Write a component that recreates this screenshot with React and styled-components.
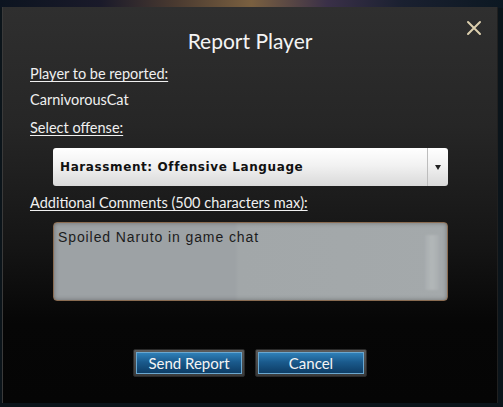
import React from 'react';
import styled, { createGlobalStyle } from 'styled-components';

const Global = createGlobalStyle`
  html, body {
    margin: 0;
    padding: 0;
    width: 503px;
    height: 407px;
    overflow: hidden;
    background:
      linear-gradient(90deg, #0c1420 0%, #1a1a2a 20%, #4a3a30 35%, #7a6040 50%, #3a3048 65%, #1a2030 80%, #0c1822 100%) top / 100% 8px no-repeat,
      #0b141a;
  }
  #root {
    height: 100%;
  }
`;

const Screen = styled.div`
  height: 100%;
  box-sizing: border-box;
  padding: 7px 5px 4px 2px;
  display: flex;
`;

const Panel = styled.div`
  flex: 1;
  position: relative;
  display: flex;
  flex-direction: column;
  background: linear-gradient(180deg, #2f2f2f 0%, #262626 30%, #151515 60%, #060606 80%, #050505 100%);
  box-shadow: inset 1px 0 0 #3a3a3a, inset -1px 0 0 #202020;
  font-family: Lato, "Open Sans", sans-serif;
  color: #f0f0f0;
  padding: 0 28px;
`;

const Close = styled.button`
  position: absolute;
  top: 13px;
  right: 16px;
  width: 16px;
  height: 16px;
  padding: 0;
  border: 0;
  background: none;
  cursor: pointer;
`;

const Title = styled.h1`
  margin: 22px 0 0;
  font-weight: 400;
  font-size: 21px;
  text-align: center;
  color: #f4f4f4;
  line-height: 24px;
`;

const Label = styled.div`
  margin-top: ${p => p.$top}px;
  font-size: 14.5px;
  line-height: 18px;
  text-decoration: underline;
  text-underline-offset: 2px;
`;

const Value = styled.div`
  margin-top: 8px;
  font-size: 14.5px;
  line-height: 18px;
`;

const Select = styled.div`
  margin: 11px 22px 0 23px;
  height: 38px;
  border-radius: 3px;
  background: linear-gradient(180deg, #ffffff 0%, #f2f2f2 45%, #d9d9d9 100%);
  display: flex;
  align-items: center;
  color: #111;
`;

const SelectText = styled.div`
  flex: 1;
  padding-left: 7px;
  font-family: "DejaVu Sans", sans-serif;
  font-weight: 700;
  font-size: 12px;
  letter-spacing: 0.6px;
`;

const Arrow = styled.div`
  width: 20px;
  height: 38px;
  border-left: 1px solid #bdbdbd;
  display: flex;
  align-items: center;
  justify-content: center;
  &::after {
    content: '';
    border-left: 3.5px solid transparent;
    border-right: 3.5px solid transparent;
    border-top: 5px solid #222;
  }
`;

const Comments = styled.div`
  margin: 10px 22px 0 23px;
  height: 77px;
  border: 1px solid #8a6c52;
  border-radius: 4px;
  background: linear-gradient(90deg, #9da2a5 0%, #9da2a5 46%, #a2a7a9 47%, #a4a9ab 100%);
  box-shadow: inset 0 0 4px rgba(60, 60, 60, 0.5);
  display: flex;
`;

const CommentText = styled.div`
  flex: 1;
  padding: 6px 4px;
  font-family: "Liberation Sans", Arial, sans-serif;
  font-size: 14px;
  letter-spacing: 0.9px;
  color: #1c1c1c;
`;

const Scroll = styled.div`
  width: 14px;
  margin: 12px 8px 10px 0;
  background: linear-gradient(90deg, #a8adaf, #b3b8b9 50%, #a8adaf);
  filter: blur(1px);
`;

const Buttons = styled.div`
  margin-top: auto;
  margin-bottom: 26px;
  display: flex;
  justify-content: center;
  gap: 10px;
`;

const Button = styled.button`
  width: 112px;
  height: 28px;
  box-sizing: border-box;
  padding: 2px;
  border: 1px solid #2a2a2a;
  border-radius: 2px;
  background: linear-gradient(180deg, #5a5a5a, #3a3a3a);
  cursor: pointer;
  & > span {
    display: block;
    height: 100%;
    box-sizing: border-box;
    border: 1px solid #6aa7cf;
    background: linear-gradient(180deg, #2f80b8 0%, #1a5a8c 45%, #0d3d66 100%);
    font-family: Lato, "Open Sans", sans-serif;
    font-size: 15px;
    line-height: 20px;
    color: #f4f4f4;
  }
`;

export default function App() {
  return (
    <>
      <Global />
      <Screen>
        <Panel>
          <Close aria-label="Close">
            <svg width="16" height="16" viewBox="0 0 16 16">
              <path d="M2 2 L14 14 M14 2 L2 14" stroke="#dccfae" strokeWidth="2" strokeLinecap="round" />
            </svg>
          </Close>
          <Title>Report Player</Title>
          <Label $top={12}>Player to be reported:</Label>
          <Value>CarnivorousCat</Value>
          <Label $top={10}>Select offense:</Label>
          <Select>
            <SelectText>Harassment: Offensive Language</SelectText>
            <Arrow />
          </Select>
          <Label $top={8}>Additional Comments (500 characters max):</Label>
          <Comments>
            <CommentText>Spoiled Naruto in game chat</CommentText>
            <Scroll />
          </Comments>
          <Buttons>
            <Button><span>Send Report</span></Button>
            <Button><span>Cancel</span></Button>
          </Buttons>
        </Panel>
      </Screen>
    </>
  );
}
